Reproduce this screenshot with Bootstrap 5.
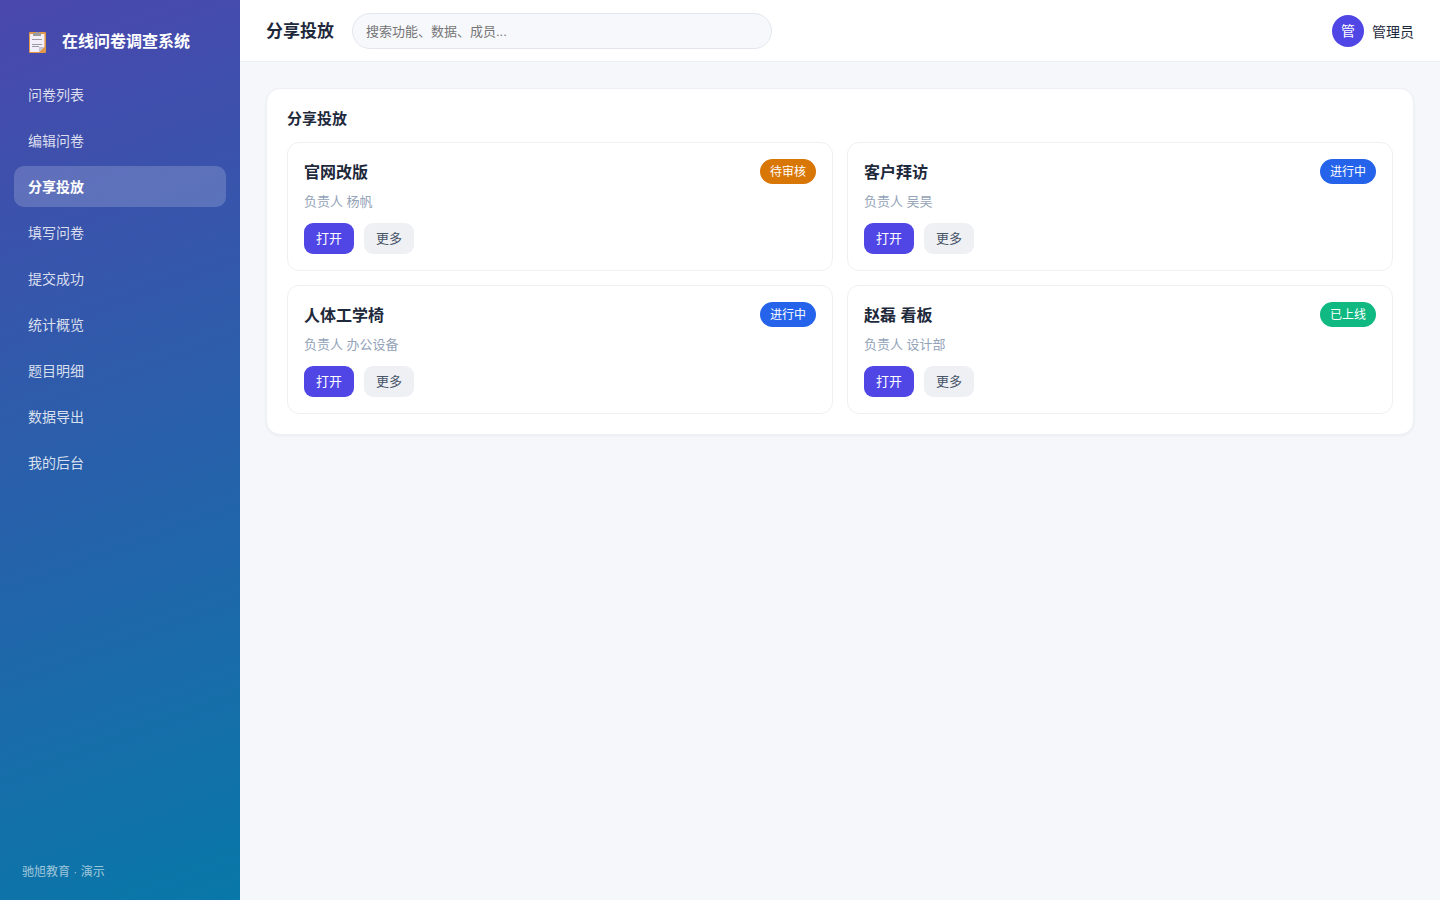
<!DOCTYPE html>
<html lang="zh-CN">
<head>
<meta charset="utf-8">
<meta name="viewport" content="width=device-width, initial-scale=1">
<title>分享投放 - 在线问卷调查系统</title>
<link href="https://cdn.jsdelivr.net/npm/bootstrap@5.3.0/dist/css/bootstrap.min.css" rel="stylesheet">
<style>
  body { font-family: "Liberation Sans", "Noto Sans CJK SC", sans-serif; font-size: 14px; line-height: 21px; color: #1e293b; background: #f5f7fb; }
  .sidebar { width: 240px; padding: 22px 14px; background: linear-gradient(160deg, #4a47ad, #0878a8); }
  .brand { height: 38px; padding: 0 14px; gap: 14px; margin-bottom: 14px; font-size: 16px; }
  .side-nav { gap: 5px; }
  .side-nav .nav-link { padding: 11px 14px 9px; border-radius: 10px; color: rgba(255,255,255,.82); }
  .side-nav .nav-link.active { background: rgba(255,255,255,.18); color: #fff; font-weight: 700; }
  .side-foot { padding-left: 8px; font-size: 12px; line-height: 12px; color: rgba(255,255,255,.6); }
  .topbar { padding: 13px 26px 12px; gap: 18px; border-bottom: 1px solid #eceef4; }
  .topbar h1 { font-size: 17px; line-height: 24px; padding-top: 2px; }
  .search { max-width: 420px; height: 36px; padding: 0 13px; font-size: 13px; border-color: #e4e6ef; background: #f7f8fc; }
  .search::placeholder { color: #757575; }
  .user-name { padding-top: 2px; }
  .avatar { width: 32px; height: 32px; background: #4f46e5; }
  .page { padding: 26px; }
  .panel { padding: 20px; border: 1px solid #eef0f5; border-radius: 14px; box-shadow: 0 1px 3px rgba(16,24,40,.05); }
  .panel h2 { font-size: 15px; line-height: 19px; margin-bottom: 14px; }
  .share-grid { --bs-gutter-x: 14px; --bs-gutter-y: 14px; }
  .share-item { padding: 16px; border: 1px solid #eef0f3; border-radius: 12px; }
  .share-item h3 { font-size: 16px; line-height: 27px; }
  .owner { margin: 5px 0 11px; font-size: 13px; color: #94a3b8; }
  .state { align-self: flex-start; padding: 6px 10px 4px; font-size: 12px; line-height: 15px; font-weight: 400; }
  .state-wait { background: #d97706; }
  .state-run { background: #2563eb; }
  .state-live { background: #10b981; }
  .acts { gap: 10px; }
  .act { padding: 5px 12px; border: 0; border-radius: 9px; font-size: 13px; line-height: 21px; }
  .act-main, .act-main:hover { background: #4f46e5; color: #fff; }
  .act-more { background: #eef0f4; color: #475569; }
</style>
</head>
<body>
<div class="d-flex min-vh-100">
  <aside class="sidebar d-flex flex-column flex-shrink-0">
    <div class="brand d-flex align-items-center text-white fw-bold">
      <svg width="20" height="24" viewBox="0 0 20 24" aria-hidden="true">
        <rect x="1" y="3" width="17" height="21" rx="1" fill="#e19747"/>
        <path d="M2 5h14.400v13l-5.400 5H2z" fill="#f3effa"/>
        <path d="M11 18h5.400L11 23z" fill="#c3c2d9"/>
        <path d="M5 4h3V3h3v1h2v3H5z" fill="#9b9b9d"/>
        <path d="M4 10.500h10M4 15.500h10M4 17.500h7" stroke="#9a9aa2"/>
      </svg>
      <span>在线问卷调查系统</span>
    </div>
    <nav class="side-nav nav flex-column">
      <a class="nav-link" href="#">问卷列表</a>
      <a class="nav-link" href="#">编辑问卷</a>
      <a class="nav-link active" aria-current="page" href="#">分享投放</a>
      <a class="nav-link" href="#">填写问卷</a>
      <a class="nav-link" href="#">提交成功</a>
      <a class="nav-link" href="#">统计概览</a>
      <a class="nav-link" href="#">题目明细</a>
      <a class="nav-link" href="#">数据导出</a>
      <a class="nav-link" href="#">我的后台</a>
    </nav>
    <div class="side-foot mt-auto">驰旭教育 · 演示</div>
  </aside>
  <div class="flex-grow-1">
    <header class="topbar d-flex align-items-center bg-white">
      <h1 class="mb-0 fw-bold text-nowrap">分享投放</h1>
      <input class="search form-control rounded-pill" type="search" placeholder="搜索功能、数据、成员..." aria-label="搜索">
      <div class="d-flex align-items-center gap-2 ms-auto text-nowrap">
        <span class="avatar rounded-circle d-flex align-items-center justify-content-center text-white">管</span>
        <span class="user-name">管理员</span>
      </div>
    </header>
    <main class="page">
      <section class="panel bg-white">
        <h2 class="fw-bold">分享投放</h2>
        <div class="share-grid row row-cols-1 row-cols-md-2">
          <div class="col"><article class="share-item">
            <div class="d-flex justify-content-between"><h3 class="mb-0 fw-bold">官网改版</h3><span class="state state-wait badge rounded-pill">待审核</span></div>
            <p class="owner">负责人 杨帆</p>
            <div class="acts d-flex"><button type="button" class="act act-main btn">打开</button><button type="button" class="act act-more btn">更多</button></div>
          </article></div>
          <div class="col"><article class="share-item">
            <div class="d-flex justify-content-between"><h3 class="mb-0 fw-bold">客户拜访</h3><span class="state state-run badge rounded-pill">进行中</span></div>
            <p class="owner">负责人 吴昊</p>
            <div class="acts d-flex"><button type="button" class="act act-main btn">打开</button><button type="button" class="act act-more btn">更多</button></div>
          </article></div>
          <div class="col"><article class="share-item">
            <div class="d-flex justify-content-between"><h3 class="mb-0 fw-bold">人体工学椅</h3><span class="state state-run badge rounded-pill">进行中</span></div>
            <p class="owner">负责人 办公设备</p>
            <div class="acts d-flex"><button type="button" class="act act-main btn">打开</button><button type="button" class="act act-more btn">更多</button></div>
          </article></div>
          <div class="col"><article class="share-item">
            <div class="d-flex justify-content-between"><h3 class="mb-0 fw-bold">赵磊 看板</h3><span class="state state-live badge rounded-pill">已上线</span></div>
            <p class="owner">负责人 设计部</p>
            <div class="acts d-flex"><button type="button" class="act act-main btn">打开</button><button type="button" class="act act-more btn">更多</button></div>
          </article></div>
        </div>
      </section>
    </main>
  </div>
</div>
<script src="https://cdn.jsdelivr.net/npm/bootstrap@5.3.0/dist/js/bootstrap.bundle.min.js"></script>
</body>
</html>
